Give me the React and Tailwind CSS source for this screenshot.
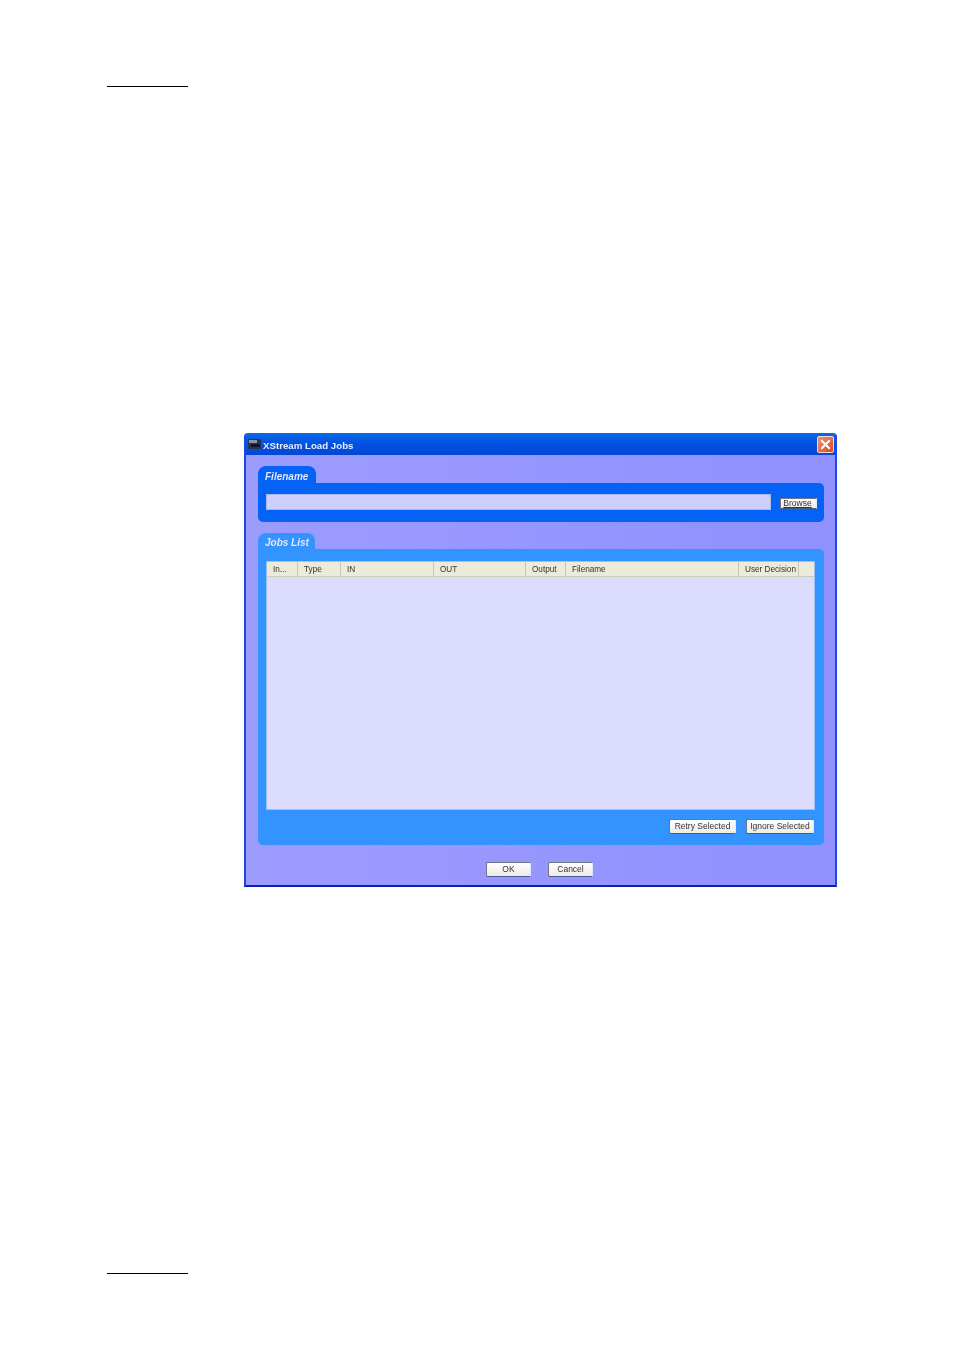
import React from 'react';

const columns = [
  { label: 'In...', width: 'w-[31px]' },
  { label: 'Type', width: 'w-[43px]' },
  { label: 'IN', width: 'w-[93px]' },
  { label: 'OUT', width: 'w-[92px]' },
  { label: 'Output', width: 'w-[40px]' },
  { label: 'Filename', width: 'w-[173px]' },
  { label: 'User Decision', width: 'w-[60px]' },
];

const XpButton = ({ children, className }) => (
  <button
    className={`flex items-center justify-center rounded-[2px] border border-[#6f7488] border-r-[#dfe6ff] border-b-[#4a5a90] bg-gradient-to-b from-white to-[#ecebe4] text-[8.5px] leading-none text-[#333] ${className}`}
  >
    {children}
  </button>
);

const PanelTab = ({ label, className }) => (
  <div className={`flex items-center rounded-t-[8px] pl-[7px] pt-[4px] text-[10px] font-bold italic leading-none text-[#dfe6ff] ${className}`}>
    {label}
  </div>
);

export default function App() {
  return (
    <div className="relative h-[1350px] w-[954px] bg-white font-['Liberation_Sans',Arial,sans-serif]">
      <div className="ml-[107px] pt-[86px]">
        <div className="h-px w-[81px] bg-black" />
      </div>

      {/* Dialog */}
      <div className="ml-[244px] mt-[346px] flex h-[454px] w-[593px] flex-col overflow-hidden rounded-t-[4px] border-x-2 border-b-2 border-x-[#1c46e8] border-b-[#0a20b0] bg-gradient-to-r from-[#9c9cff] to-[#9090ff] blur-[0.6px]">
        {/* Title bar */}
        <div className="-mx-[2px] flex h-[22px] shrink-0 items-center bg-gradient-to-b from-[#0a6ae8] via-[#0450e0] to-[#0348d8] pl-[4px] pr-[3px]">
          <svg width="13" height="10" viewBox="0 0 13 10" className="mb-[1px] shrink-0">
            <rect width="13" height="10" rx="1" fill="#2b3350" />
            <rect x="1" y="1" width="8" height="3" fill="#8a90a8" />
            <rect x="3" y="5" width="9" height="3" fill="#11152a" />
          </svg>
          <span className="ml-[2px] pt-[4px] text-[9.7px] font-bold leading-none text-[#e6eeff]">XStream Load Jobs</span>
          <div className="ml-auto flex h-[17px] w-[17px] items-center justify-center rounded-[2px] border border-[#f2d8d0] bg-gradient-to-br from-[#f09070] to-[#d84820]">
            <svg width="11" height="11" viewBox="0 0 11 11">
              <path d="M2 2 L9 9 M9 2 L2 9" stroke="#fff" strokeWidth="2" strokeLinecap="square" />
            </svg>
          </div>
        </div>

        <div className="flex flex-1 flex-col px-[12px] pt-[11px]">
          {/* Filename */}
          <PanelTab label="Filename" className="h-[17px] w-[58px] bg-[#0462f4]" />
          <div className="flex h-[39px] w-[566px] items-start rounded-b-[5px] rounded-tr-[5px] bg-[#0462f4] pl-[8px] pt-[11px]">
            <div className="h-[16px] w-[505px] border border-[#a9b8f4] bg-[#cfcfff]" />
            <XpButton className="ml-[9px] mt-[4px] h-[11px] w-[37px] !rounded-none pr-[2px]">
              <span className="underline">Browse</span>
            </XpButton>
          </div>

          {/* Jobs list */}
          <PanelTab label="Jobs List" className="mt-[11px] h-[16px] w-[57px] bg-[#3394ff]" />
          <div className="flex h-[296px] w-[566px] flex-col rounded-b-[5px] rounded-tr-[5px] bg-[#3394ff] pl-[8px] pt-[12px]">
            <div className="h-[249px] w-[549px] border border-[#9cc0f4] bg-[#dcdcfe]">
              <div className="flex h-[15px] border-b border-[#cfccb8] bg-[#ecead8]">
                {columns.map((col) => (
                  <div
                    key={col.label}
                    className={`flex shrink-0 items-center justify-start border-r border-[#c9c6b2] pl-[6px] pt-[2px] text-[8.2px] leading-none text-[#333] ${col.width}`}
                  >
                    <span className="whitespace-nowrap">{col.label}</span>
                  </div>
                ))}
              </div>
            </div>
            <div className="mt-[9px] flex w-[548px] justify-end gap-[10px]">
              <XpButton className="h-[15px] w-[67px]">Retry Selected</XpButton>
              <XpButton className="h-[15px] w-[68px]">Ignore Selected</XpButton>
            </div>
          </div>

          {/* Dialog buttons */}
          <div className="mt-[17px] flex justify-center gap-[17px] pr-[2px]">
            <XpButton className="h-[15px] w-[45px]">OK</XpButton>
            <XpButton className="h-[15px] w-[45px]">Cancel</XpButton>
          </div>
        </div>
      </div>

      <div className="ml-[107px] mt-[386px]">
        <div className="h-px w-[81px] bg-black" />
      </div>
    </div>
  );
}
